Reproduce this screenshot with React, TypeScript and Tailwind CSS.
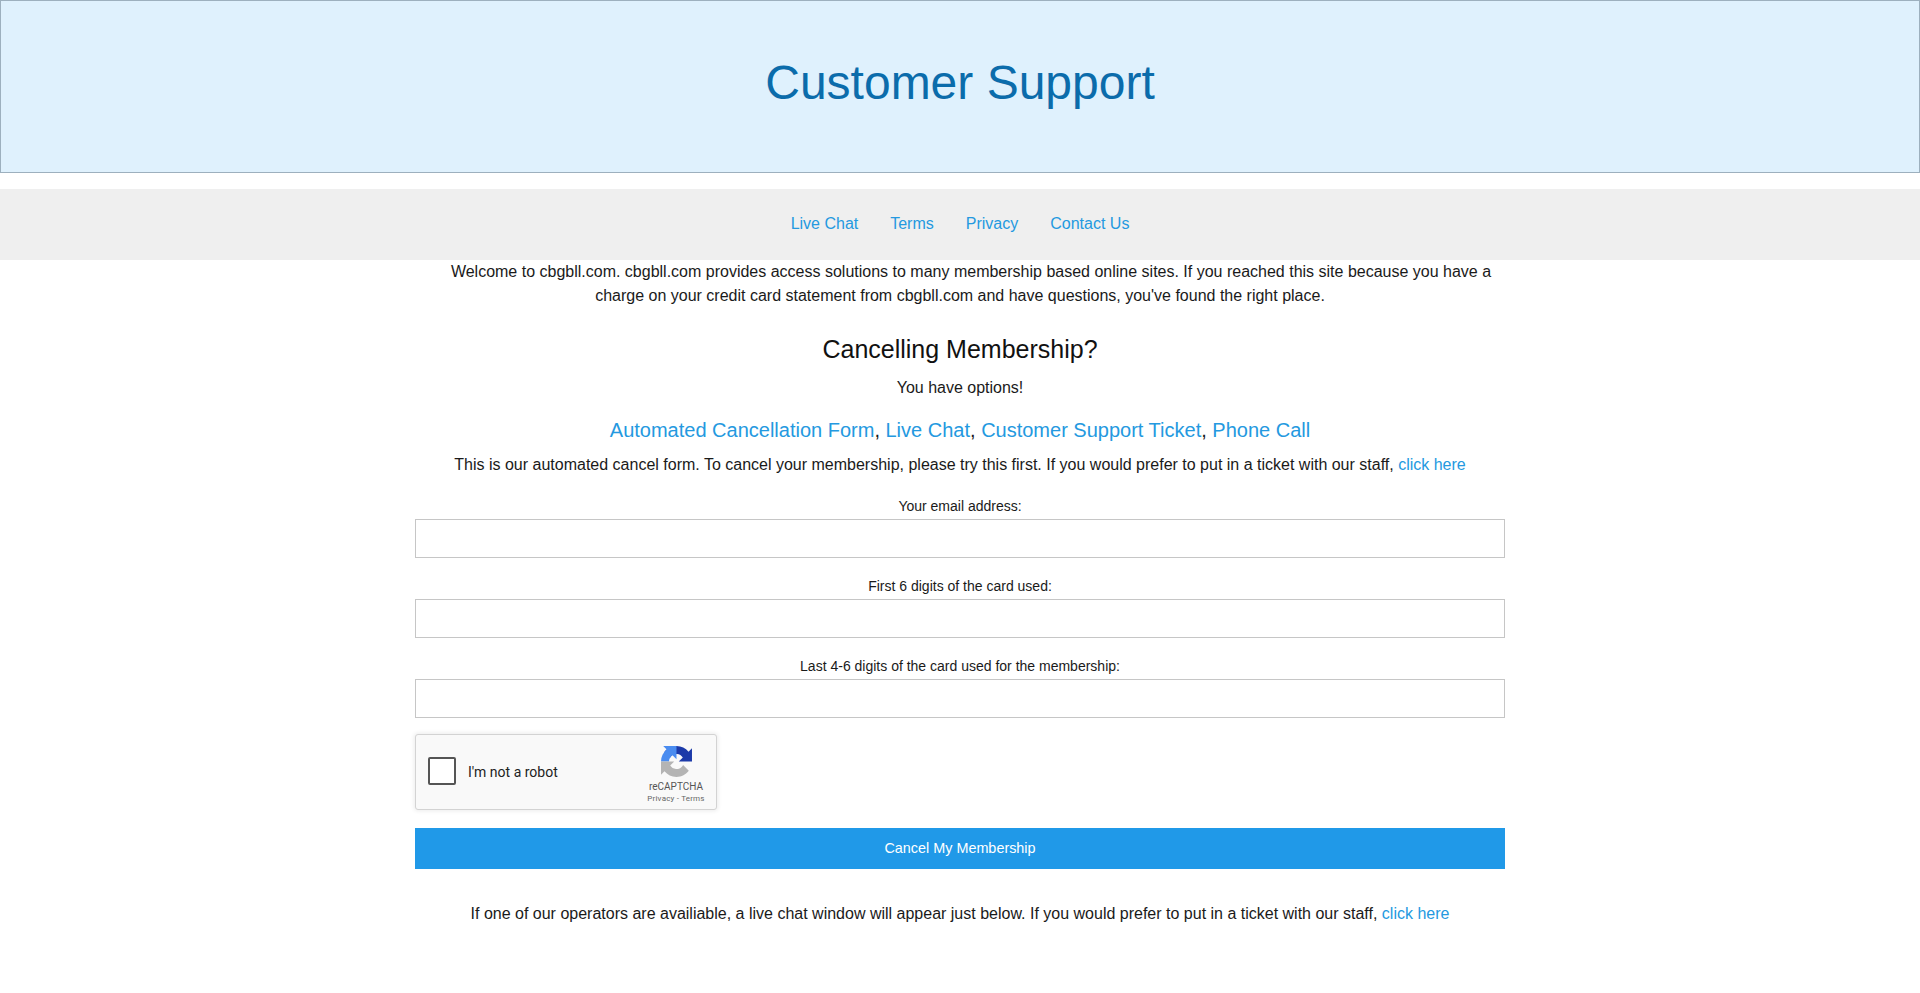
export default function App() {
  const link = "text-[#2499e0]";
  const fields = ["Your email address:", "First 6 digits of the card used:", "Last 4-6 digits of the card used for the membership:"];
  return (
    <div className="min-h-[993px] bg-white text-[#1a1a1a] text-base font-['Liberation_Sans',Arial,sans-serif]">
      <header className="h-[173px] border border-[#9db0be] bg-[#dff1fd] pt-[46px] text-center">
        <h1 className="text-[48px] leading-[72px] text-[#0b6cab]">Customer Support</h1>
      </header>
      <nav className="mt-4 flex h-[71px] items-center justify-center gap-8 bg-[#efefef] pb-[2px] text-base">
        <a className={link}>Live Chat</a>
        <a className={link}>Terms</a>
        <a className={link}>Privacy</a>
        <a className={link}>Contact Us</a>
      </nav>
      <main className="mx-auto w-[1090px] text-center">
        <p className="indent-[22px] leading-6">
          Welcome to cbgbll.com. cbgbll.com provides access solutions to many membership based online sites. If you reached this site because you have a charge on your credit card statement from cbgbll.com and have questions, you've found the right place.
        </p>
        <h2 className="mt-[23px] text-[25px] leading-[37px] text-[#111111]">Cancelling Membership?</h2>
        <p className="mt-[8px] leading-6">You have options!</p>
        <p className="mt-[15px] text-[20px] leading-[30px]">
          <a className={link}>Automated Cancellation Form</a>, <a className={link}>Live Chat</a>, <a className={link}>Customer Support Ticket</a>, <a className={link}>Phone Call</a>
        </p>
        <p className="mt-[8px] leading-6">
          This is our automated cancel form. To cancel your membership, please try this first. If you would prefer to put in a ticket with our staff, <a className={link}>click here</a>
        </p>
        <form className="mt-[19px]">
          {fields.map((f, i) => (
            <div key={f} className={i === 2 ? "mb-[16px]" : "mb-[18px]"}>
              <label className="block text-sm leading-[21px]">{f}</label>
              <input className="mt-[2px] block h-[39px] w-full border border-[#c6c6c6] bg-white" />
            </div>
          ))}
          <div className="flex h-[76px] w-[302px] items-center rounded-[3px] border border-[#d3d3d3] bg-[#f9f9f9] shadow-[0_0_4px_1px_rgba(0,0,0,0.08)]">
            <div className="mb-[2px] ml-[12px] h-[28px] w-[28px] rounded-[2px] border-2 border-[#555555] bg-white" />
            <span className="ml-[12px] font-['Roboto',sans-serif] text-sm text-[#222222]">I'm not a robot</span>
            <div className="ml-auto mr-[11px] flex w-[58px] flex-col items-center pt-[6px]">
              <svg viewBox="0 0 64 64" className="h-[31px] w-[31px]">
                <path d="M64 31.955l-.033-1.37V4.687l-7.16 7.16C50.948 4.674 42.033.093 32.05.093c-10.4 0-19.622 4.96-25.458 12.64l11.736 11.86a15.55 15.55 0 0 1 4.754-5.334c2.05-1.6 4.952-2.906 8.968-2.906.485 0 .86.057 1.135.163 4.976.393 9.29 3.14 11.83 7.125l-8.307 8.307 26.3.004" fill="#1c3aa9" />
                <path d="M31.862.001l-1.37.033H4.6l7.16 7.16C4.588 13.05.007 21.965.007 31.95h16.4c0-.485.057-.86.163-1.135.393-4.976 3.14-9.29 7.125-11.83l8.307 8.307.004-26.3" fill="#4a8cf0" />
                <path d="M.001 31.953l.033 1.37v25.9l7.16-7.16c5.858 7.172 14.774 11.753 24.76 11.753 10.4 0 19.622-4.96 25.458-12.64l-11.736-11.86a15.55 15.55 0 0 1-4.754 5.334c-2.05 1.6-4.952 2.906-8.968 2.906-.485 0-.86-.057-1.135-.163-4.976-.393-9.29-3.14-11.83-7.125l8.307-8.307-26.3-.004" fill="#b4b4b4" />
              </svg>
              <span className="mt-[3px] font-['Roboto',sans-serif] text-[10px] leading-[13px] text-[#555555]">reCAPTCHA</span>
              <span className="mt-[1px] whitespace-nowrap font-['Roboto',sans-serif] text-[8px] leading-[10px] tracking-[0.2px] text-[#666666]">Privacy - Terms</span>
            </div>
          </div>
          <button type="button" className="mt-[18px] block h-[41px] w-full bg-[#2099e8] pt-[1px] text-[14.4px] text-white">Cancel My Membership</button>
        </form>
        <p className="mt-[33px] leading-6">
          If one of our operators are availiable, a live chat window will appear just below. If you would prefer to put in a ticket with our staff, <a className={link}>click here</a>
        </p>
      </main>
    </div>
  );
}
